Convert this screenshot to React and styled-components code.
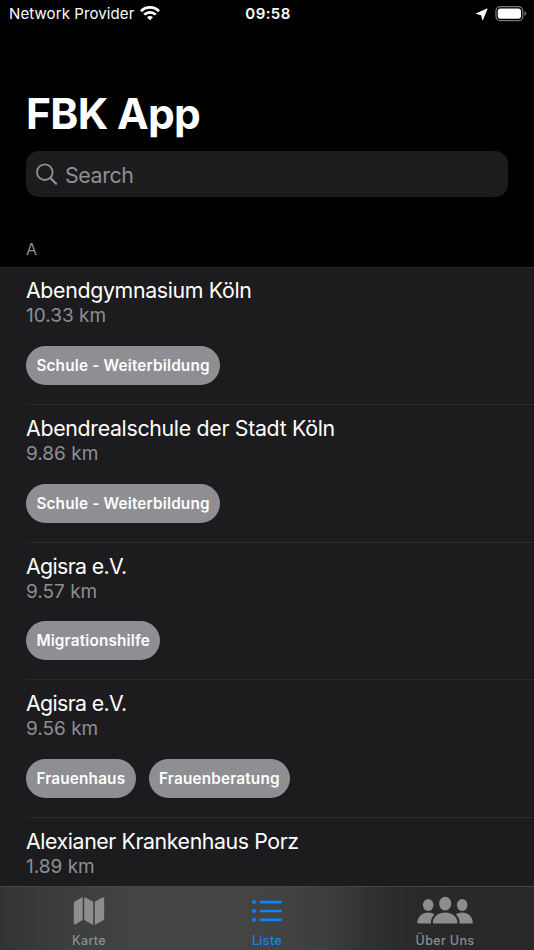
import React from 'react'
import styled, { createGlobalStyle } from 'styled-components';

const Color = {
  black: '#000',
  white: '#fff',
  panel: '#1c1c1e',
  gray: '#8e8e93',
  tabGray: '#8d8d8d',
  line: '#2b2b2d',
  blue: '#0a84ff',
};

const places = [
  { name: 'Abendgymnasium Köln', distance: '10.33 km', tags: ['Schule - Weiterbildung'], tracking: -0.32 },
  { name: 'Abendrealschule der Stadt Köln', distance: '9.86 km', tags: ['Schule - Weiterbildung'], tracking: -0.3 },
  { name: 'Agisra e.V.', distance: '9.57 km', tags: ['Migrationshilfe'], tracking: -0.62 },
  { name: 'Agisra e.V.', distance: '9.56 km', tags: ['Frauenhaus', 'Frauenberatung'], tracking: -0.62 },
  { name: 'Alexianer Krankenhaus Porz', distance: '1.89 km', tags: [], tracking: -0.4 },
];

const GlobalStyle = createGlobalStyle`
  * {
    box-sizing: border-box;
  }

  body {
    margin: 0;
    background: ${Color.black};
    font-family: Inter, "Liberation Sans", sans-serif;
    overflow: hidden;
  }
`;

const Screen = styled.div`
  display: flex;
  flex-direction: column;
  width: 534px;
  height: 950px;
  overflow: hidden;
  background: ${Color.black};
  color: ${Color.white};
`;

const StatusBar = styled.div`
  display: grid;
  grid-template-columns: 1fr auto 1fr;
  align-items: center;
  flex: none;
  height: 28px;
  padding: 0 7px 0 9px;
  font-size: 15px;
  line-height: 20px;
`;

const Carrier = styled.div`
  display: flex;
  align-items: center;
  gap: 6px;
  letter-spacing: 0.1px;
  white-space: nowrap;
`;

const Clock = styled.div`
  font-weight: 600;
  letter-spacing: 0.4px;
`;

const StatusIcons = styled.div`
  display: flex;
  align-items: center;
  justify-content: flex-end;
  gap: 7px;
`;

const Header = styled.header`
  flex: none;
  height: 239px;
  padding: 60px 26px 0;
`;

const Title = styled.h1`
  margin: 0;
  font-size: 42.5px;
  font-weight: 700;
  line-height: 52px;
  letter-spacing: -0.7px;
`;

const SearchField = styled.div`
  display: flex;
  align-items: center;
  gap: 7px;
  height: 46px;
  margin-top: 11.4px;
  padding-left: 10px;
  border-radius: 13px;
  background: ${Color.panel};
  color: ${Color.gray};
  font-size: 21.4px;
  line-height: 28px;
  letter-spacing: -0.4px;
`;

const SearchLabel = styled.span`
  padding-top: 1px;
`;

const SectionTitle = styled.div`
  margin-top: 40.6px;
  font-size: 16px;
  line-height: 22px;
  color: ${Color.gray};
`;

const List = styled.main`
  flex: 1;
  min-height: 0;
  overflow: hidden;
  border-top: 1px solid ${Color.line};
  background: ${Color.panel};
`;

const Row = styled.section`
  height: 137.6px;
  margin-left: 26px;
  padding-top: 10px;
  border-bottom: 1px solid ${Color.line};

  &:first-child {
    height: 137px;
    padding-top: 9.4px;
  }
`;

const PlaceName = styled.div`
  font-size: 21.3px;
  line-height: 26px;
  letter-spacing: ${props => props.$tracking}px;
`;

const Distance = styled.div`
  padding-top: 1px;
  font-size: 19px;
  line-height: 24px;
  color: ${Color.gray};
`;

const Tags = styled.div`
  display: flex;
  gap: 13px;
  margin-top: 17.8px;
`;

const Tag = styled.span`
  height: 39px;
  padding: 0 10.4px;
  border-radius: 19.5px;
  background: ${Color.gray};
  font-size: 15.3px;
  font-weight: 600;
  line-height: 39px;
  letter-spacing: 0.18px;
`;

const TabBar = styled.nav`
  display: grid;
  grid-template-columns: repeat(3, 1fr);
  flex: none;
  height: 64px;
  border-top: 1px solid #454547;
  background: linear-gradient(90deg, #323333 0, #3c3d3d 60px, #444546 150px, #434343 280px, #3c3d3d 330px, #2e2f2f 375px, #292929 420px, #282828 534px);
`;

const Tab = styled.div`
  display: flex;
  flex-direction: column;
  align-items: center;
  color: ${props => props.$active ? Color.blue : Color.tabGray};
  font-size: 12.5px;
  font-weight: 500;
  line-height: 16px;
  letter-spacing: 0.35px;
`;

const TabIcon = styled.div`
  display: flex;
  align-items: center;
  height: 46px;
  padding-top: 1px;
`;

const WifiIcon = () => (
  <svg width="20" height="16" viewBox="0 0 20 16" fill="none" stroke="#fff" strokeWidth="2.7">
    <path d="M1 5.2C6 0.2 14 0.2 19 5.2" />
    <path d="M4.2 8.6C7.4 5.5 12.6 5.5 15.8 8.6" />
    <path d="M7 11.2C8.7 9.6 11.3 9.6 13 11.2L10 14.3Z" fill="#fff" stroke="none" />
  </svg>
);

const LocationIcon = () => (
  <svg width="13" height="13" viewBox="0 0 13 13" fill="#fff">
    <path d="M11.9 0.6Q12.8 0.3 12.4 1.2L8.1 11.8Q7.6 12.9 7.2 11.8L6.1 7.2L1.3 6.1Q0.4 5.8 1.3 5.3Z" />
  </svg>
);

const BatteryIcon = () => (
  <svg width="32" height="16" viewBox="0 0 32 16">
    <rect x="1" y="0.6" width="26.8" height="14" rx="4.3" fill="none" stroke="#777" strokeWidth="1.3" />
    <rect x="2.8" y="2.4" width="23.2" height="10.4" rx="2.7" fill="#fff" />
    <path d="M29.5 5.1Q31.3 5.9 31.3 7.6T29.5 10.1Z" fill="#777" />
  </svg>
);

const SearchIcon = () => (
  <svg width="22" height="23" viewBox="0 0 22 23" fill="none" stroke={Color.gray} strokeLinecap="round">
    <circle cx="8.8" cy="9.2" r="7.8" strokeWidth="1.8" />
    <path d="M14.7 15.3L20.1 20.8" strokeWidth="2.3" />
  </svg>
);

const MapIcon = () => (
  <svg width="32" height="30" viewBox="0 0 32 30" fill="currentColor">
    <path d="M1.7 5.5L9.7 1V24L2.6 28.2Q0.8 29 0.8 27.2V7.2Q0.8 6 1.7 5.5Z" />
    <path d="M11.3 1L20.2 5.8V28.9L11.3 24Z" />
    <path d="M21.8 5.8L29.4 1.4Q31.2 0.7 31.2 2.5V22.4Q31.2 23.6 30.2 24.2L21.8 28.9Z" />
  </svg>
);

const ListIcon = () => (
  <svg width="30" height="22" viewBox="0 0 30 22" fill="none" stroke="currentColor" strokeWidth="2.7" strokeLinecap="round">
    <path d="M8.8 2.1H28.6M8.8 11H28.6M8.8 19.8H28.6" />
    <path d="M2 2.1H2.01M2 11H2.01M2 19.8H2.01" strokeWidth="4" />
  </svg>
);

const PeopleIcon = () => (
  <svg width="56" height="29" viewBox="0 0 56 29" fill="currentColor">
    <ellipse cx="11.2" cy="9" rx="5.3" ry="6" />
    <ellipse cx="28.2" cy="7.7" rx="6.1" ry="6.9" />
    <ellipse cx="45.2" cy="9" rx="5.3" ry="6" />
    <path d="M1.8 27.5Q0.2 27.5 0.3 25.9C1 20.8 5.5 16.6 11.2 16.6Q14.9 16.6 17.5 18.3Q14.3 21.5 13.9 25.5Q13.8 26.8 14.2 27.5Z" />
    <path d="M17.2 27.5Q15.7 27.5 15.8 25.9C16.5 20.3 21.7 16.4 28.2 16.4S39.9 20.3 40.5 25.9Q40.6 27.5 39.2 27.5Z" />
    <path d="M54.4 27.5Q56 27.5 55.9 25.9C55.2 20.8 50.9 16.6 45.2 16.6Q41.5 16.6 38.9 18.3Q42.1 21.5 42.5 25.5Q42.6 26.8 42.2 27.5Z" />
  </svg>
);

const tabs = [
  { label: 'Karte', Icon: MapIcon },
  { label: 'Liste', Icon: ListIcon, active: true },
  { label: 'Über Uns', Icon: PeopleIcon },
];

const App = () => {
  return (
    <Screen>
      <GlobalStyle />
      <StatusBar>
        <Carrier>
          Network Provider
          <WifiIcon />
        </Carrier>
        <Clock>09:58</Clock>
        <StatusIcons>
          <LocationIcon />
          <BatteryIcon />
        </StatusIcons>
      </StatusBar>
      <Header>
        <Title>FBK App</Title>
        <SearchField>
          <SearchIcon />
          <SearchLabel>Search</SearchLabel>
        </SearchField>
        <SectionTitle>A</SectionTitle>
      </Header>
      <List>
        {places.map((place, index) => (
          <Row key={index}>
            <PlaceName $tracking={place.tracking}>{place.name}</PlaceName>
            <Distance>{place.distance}</Distance>
            <Tags>
              {place.tags.map(tag => <Tag key={tag}>{tag}</Tag>)}
            </Tags>
          </Row>
        ))}
      </List>
      <TabBar>
        {tabs.map(({ label, Icon, active }) => (
          <Tab key={label} $active={active}>
            <TabIcon><Icon /></TabIcon>
            {label}
          </Tab>
        ))}
      </TabBar>
    </Screen>
  )
}

export default App
